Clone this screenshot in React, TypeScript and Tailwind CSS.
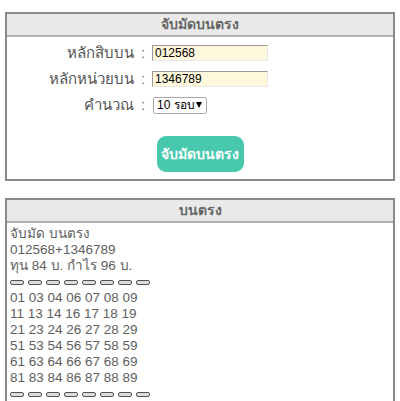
import * as React from 'react'

const rows = [
  '01 03 04 06 07 08 09',
  '11 13 14 16 17 18 19',
  '21 23 24 26 27 28 29',
  '51 53 54 56 57 58 59',
  '61 63 64 66 67 68 69',
  '81 83 84 86 87 88 89',
]

function Dashes() {
  return (
    <div className="flex items-center gap-[4px] h-[16px]">
      {Array.from({ length: 8 }).map((_, i) => (
        <span key={i} className="block w-[14px] h-[5px] border border-[#555] bg-[#dcdcdc] rounded-[2px]" />
      ))}
    </div>
  )
}

function Field({ label, children }: { label: string; children: React.ReactNode }) {
  return (
    <div className="flex items-center h-[26px]">
      <span className="w-[127px] text-right text-[15px] text-[#555]">{label}</span>
      <span className="w-[18px] text-center text-[15px] text-[#777]">:</span>
      {children}
    </div>
  )
}

export default function App() {
  const [ten, setTen] = React.useState('012568')
  const [unit, setUnit] = React.useState('1346789')

  return (
    <div className="w-[400px] h-[401px] overflow-hidden bg-white pt-[12px] px-[5px] font-['Liberation_Sans','Noto_Sans',sans-serif]">
      {/* ฟอร์ม */}
      <div className="border-2 border-[#8a8a8a]">
        <div className="h-[23px] flex items-center justify-center bg-[#e9e9e9] border-b-2 border-[#b0b0b0] text-[14px] font-bold text-[#666]">
          จับมัดบนตรง
        </div>
        <div className="pt-[3px] pb-[7px]">
          <Field label="หลักสิบบน">
            <input
              value={ten}
              onChange={(e) => setTen(e.target.value)}
              className="w-[116px] h-[16px] pl-[2px] text-[12px] text-black bg-[#fff8dc] border border-t-[#999] border-l-[#999] border-r-[#e8e8e8] border-b-[#e8e8e8] outline-none"
            />
          </Field>
          <Field label="หลักหน่วยบน">
            <input
              value={unit}
              onChange={(e) => setUnit(e.target.value)}
              className="w-[116px] h-[16px] pl-[2px] text-[12px] text-black bg-[#fff8dc] border border-t-[#999] border-l-[#999] border-r-[#e8e8e8] border-b-[#e8e8e8] outline-none"
            />
          </Field>
          <Field label="คำนวณ">
            <div className="relative ml-[1px] flex items-center">
              <select className="appearance-none w-[54px] h-[17px] pl-[3px] text-[12px] leading-[15px] text-black bg-white border border-[#a9a9a9] rounded-[2px] outline-none">
                <option>10 รอบ</option>
                <option>20 รอบ</option>
              </select>
              <span className="absolute right-[5px] top-[5px] w-0 h-0 border-l-[3px] border-r-[3px] border-t-[6px] border-l-transparent border-r-transparent border-t-black pointer-events-none" />
            </div>
          </Field>
          <div className="flex justify-center mt-[18px]">
            <button className="w-[87px] h-[36px] rounded-[9px] bg-[#48c9ae] text-white text-[14px] font-bold">
              จับมัดบนตรง
            </button>
          </div>
        </div>
      </div>

      {/* ผลลัพธ์ */}
      <div className="mt-[17px] border-2 border-[#8a8a8a] h-[220px]">
        <div className="h-[23px] flex items-center justify-center bg-[#e9e9e9] border-b-2 border-[#b0b0b0] text-[14px] font-bold text-[#666]">
          บนตรง
        </div>
        <div className="pt-[3px] pl-[3px] text-[13.5px] leading-[16px] text-[#606060]">
          <div>จับมัด บนตรง</div>
          <div>012568+1346789</div>
          <div>ทุน 84 บ. กำไร 96 บ.</div>
          <Dashes />
          {rows.map((r) => (
            <div key={r}>{r}</div>
          ))}
          <Dashes />
        </div>
      </div>
    </div>
  )
}
